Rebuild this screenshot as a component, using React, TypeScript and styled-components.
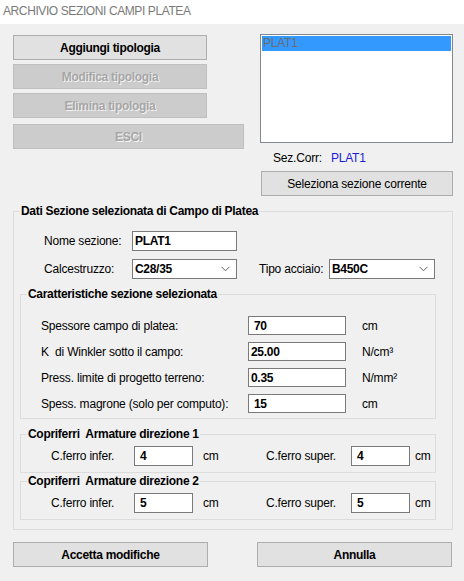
import React from "react";
import styled, { createGlobalStyle } from "styled-components";

const Global = createGlobalStyle`
  html, body { margin: 0; padding: 0; background: #f0f0f0; }
  body { font-family: "Liberation Sans", Arial, sans-serif; font-size: 12px; color: #000; letter-spacing: -0.2px; }
  * { box-sizing: border-box; }
`;

const Window = styled.div`
  width: 464px;
  height: 581px;
  background: #f0f0f0;
  display: flex;
  flex-direction: column;
  overflow: hidden;
`;

const TitleBar = styled.div`
  height: 24px;
  background: #fff;
  padding: 4px 0 0 3px;
  font-size: 12px;
  color: #7a7a7a;
  letter-spacing: -0.4px;
  line-height: 14px;
`;

const Main = styled.div`
  padding: 10px 11px 0 13px;
  display: flex;
  flex-direction: column;
`;

const Top = styled.div`
  display: flex;
  align-items: flex-start;
`;

const LeftCol = styled.div`
  width: 231px;
  padding-top: 1px;
  display: flex;
  flex-direction: column;
  gap: 4px;
`;

const RightCol = styled.div`
  width: 194px;
  margin-left: 16px;
  display: flex;
  flex-direction: column;
`;

const Button = styled.button<{ $w?: number; $bold?: boolean }>`
  width: ${(p) => p.$w ?? 194}px;
  height: 25px;
  margin: 0;
  padding: 0;
  border: 1px solid #adadad;
  background: #e1e1e1;
  font-family: inherit;
  font-size: 12px;
  letter-spacing: ${(p) => (p.$bold === false ? "-0.2px" : "-0.3px")};
  font-weight: ${(p) => (p.$bold === false ? "normal" : "bold")};
  color: #000;
  &:disabled {
    background: #cccccc;
    border-color: #bfbfbf;
    color: #a6a6a6;
    text-shadow: 1px 1px 0 #f4f4f4;
  }
`;

const ExitButton = styled(Button)`
  margin-top: 2px;
`;

const ListBox = styled.div`
  height: 109px;
  border: 1px solid #828790;
  background: #fff;
  padding: 1px;
`;

const ListItem = styled.div<{ $selected?: boolean }>`
  height: 15px;
  line-height: 15px;
  padding-left: 1px;
  font-size: 12px;
  color: #6d6d6d;
  background: ${(p) => (p.$selected ? "#3399ff" : "transparent")};
`;

const CurrentRow = styled.div`
  height: 28px;
  display: flex;
  align-items: center;
  padding: 2px 0 0 13px;
  gap: 9px;
`;

const CurrentValue = styled.span`
  color: #1c1cd6;
`;

const Group = styled.fieldset<{ $mt?: number }>`
  margin: ${(p) => p.$mt ?? 0}px 0 0 0;
  padding: 0;
  border: 1px solid #dcdcdc;
  min-width: 0;
`;

const Legend = styled.legend`
  margin-left: 6px;
  padding: 0 1px;
  font-weight: bold;
  font-size: 12px;
  line-height: 14px;
  letter-spacing: -0.3px;
  color: #000;
`;

const GroupBody = styled.div<{ $pad: string; $gap?: number }>`
  padding: ${(p) => p.$pad};
  display: flex;
  flex-direction: column;
  gap: ${(p) => p.$gap ?? 0}px;
`;

const FormRow = styled.div<{ $h?: number }>`
  display: flex;
  align-items: center;
  height: ${(p) => p.$h ?? 20}px;
`;

const Label = styled.span<{ $w: number; $pl?: number; $ml?: number }>`
  width: ${(p) => p.$w}px;
  padding-left: ${(p) => p.$pl ?? 0}px;
  margin-left: ${(p) => p.$ml ?? 0}px;
  flex: none;
  white-space: nowrap;
`;

const TextBox = styled.div<{ $w: number; $h?: number; $indent?: number }>`
  width: ${(p) => p.$w}px;
  height: ${(p) => p.$h ?? 20}px;
  border: 1px solid #7a7a7a;
  background: #fff;
  flex: none;
  display: flex;
  align-items: center;
  padding-left: ${(p) => p.$indent ?? 2}px;
  font-weight: bold;
  font-size: 12px;
  letter-spacing: -0.3px;
`;

const Select = styled(TextBox)`
  justify-content: space-between;
  padding-right: 6px;
`;

const Unit = styled.span<{ $ml: number; $w?: number }>`
  margin-left: ${(p) => p.$ml}px;
  width: ${(p) => (p.$w ? `${p.$w}px` : "auto")};
  flex: none;
  white-space: nowrap;
`;

const Footer = styled.div`
  display: flex;
  justify-content: space-between;
  padding: 12px 1px 0 0;
`;

const Chevron = () => (
  <svg width="9" height="6" viewBox="0 0 9 6">
    <path d="M0.5 0.8 L4.5 4.8 L8.5 0.8" fill="none" stroke="#606060" strokeWidth="1" />
  </svg>
);

export default function App() {
  return (
    <Window>
      <Global />
      <TitleBar>ARCHIVIO SEZIONI CAMPI PLATEA</TitleBar>
      <Main>
        <Top>
          <LeftCol>
            <Button>Aggiungi tipologia</Button>
            <Button disabled>Modifica tipologia</Button>
            <Button disabled>Elimina tipologia</Button>
            <ExitButton $w={231} disabled>ESCI</ExitButton>
          </LeftCol>
          <RightCol>
            <ListBox>
              <ListItem $selected>PLAT1</ListItem>
            </ListBox>
            <CurrentRow>
              <span>Sez.Corr:</span>
              <CurrentValue>PLAT1</CurrentValue>
            </CurrentRow>
            <Button $w={192} $bold={false} style={{ marginLeft: 1 }}>
              Seleziona sezione corrente
            </Button>
          </RightCol>
        </Top>

        <Group $mt={8}>
          <Legend>Dati Sezione selezionata di Campo di Platea</Legend>
          <GroupBody $pad="13px 16px 9px 6px" $gap={8}>
            <FormRow>
              <Label $w={112} $pl={24}>Nome sezione:</Label>
              <TextBox $w={105}>PLAT1</TextBox>
            </FormRow>
            <FormRow>
              <Label $w={112} $pl={24}>Calcestruzzo:</Label>
              <Select $w={105}>
                <span>C28/35</span>
                <Chevron />
              </Select>
              <Label $w={70} $ml={22}>Tipo acciaio:</Label>
              <Select $w={106}>
                <span>B450C</span>
                <Chevron />
              </Select>
            </FormRow>

            <Group $mt={0}>
              <Legend>Caratteristiche sezione selezionata</Legend>
              <GroupBody $pad="15px 0 5px 20px" $gap={7}>
                <FormRow $h={19}>
                  <Label $w={207}>Spessore campo di platea:</Label>
                  <TextBox $w={98} $h={19} $indent={5}>70</TextBox>
                  <Unit $ml={16}>cm</Unit>
                </FormRow>
                <FormRow $h={19}>
                  <Label $w={207}>K&nbsp; di Winkler sotto il campo:</Label>
                  <TextBox $w={98} $h={19} $indent={2}>25.00</TextBox>
                  <Unit $ml={16}>N/cm³</Unit>
                </FormRow>
                <FormRow $h={19}>
                  <Label $w={207}>Press. limite di progetto terreno:</Label>
                  <TextBox $w={98} $h={19} $indent={2}>0.35</TextBox>
                  <Unit $ml={16}>N/mm²</Unit>
                </FormRow>
                <FormRow $h={19}>
                  <Label $w={207}>Spess. magrone (solo per computo):</Label>
                  <TextBox $w={98} $h={19} $indent={5}>15</TextBox>
                  <Unit $ml={16}>cm</Unit>
                </FormRow>
              </GroupBody>
            </Group>

            <div>
              <Group $mt={0}>
                <Legend>Copriferri&nbsp; Armature direzione 1</Legend>
                <GroupBody $pad="5px 0 6px 30px">
                  <FormRow>
                    <Label $w={83}>C.ferro infer.</Label>
                    <TextBox $w={59} $indent={5}>4</TextBox>
                    <Unit $ml={10} $w={63}>cm</Unit>
                    <Label $w={85}>C.ferro super.</Label>
                    <TextBox $w={59} $indent={5}>4</TextBox>
                    <Unit $ml={5}>cm</Unit>
                  </FormRow>
                </GroupBody>
              </Group>
              <Group $mt={1}>
                <Legend>Copriferri&nbsp; Armature direzione 2</Legend>
                <GroupBody $pad="5px 0 6px 30px">
                  <FormRow>
                    <Label $w={83}>C.ferro infer.</Label>
                    <TextBox $w={59} $indent={5}>5</TextBox>
                    <Unit $ml={10} $w={63}>cm</Unit>
                    <Label $w={85}>C.ferro super.</Label>
                    <TextBox $w={59} $indent={5}>5</TextBox>
                    <Unit $ml={5}>cm</Unit>
                  </FormRow>
                </GroupBody>
              </Group>
            </div>
          </GroupBody>
        </Group>

        <Footer>
          <Button $w={195}>Accetta modifiche</Button>
          <Button $w={195}>Annulla</Button>
        </Footer>
      </Main>
    </Window>
  );
}
